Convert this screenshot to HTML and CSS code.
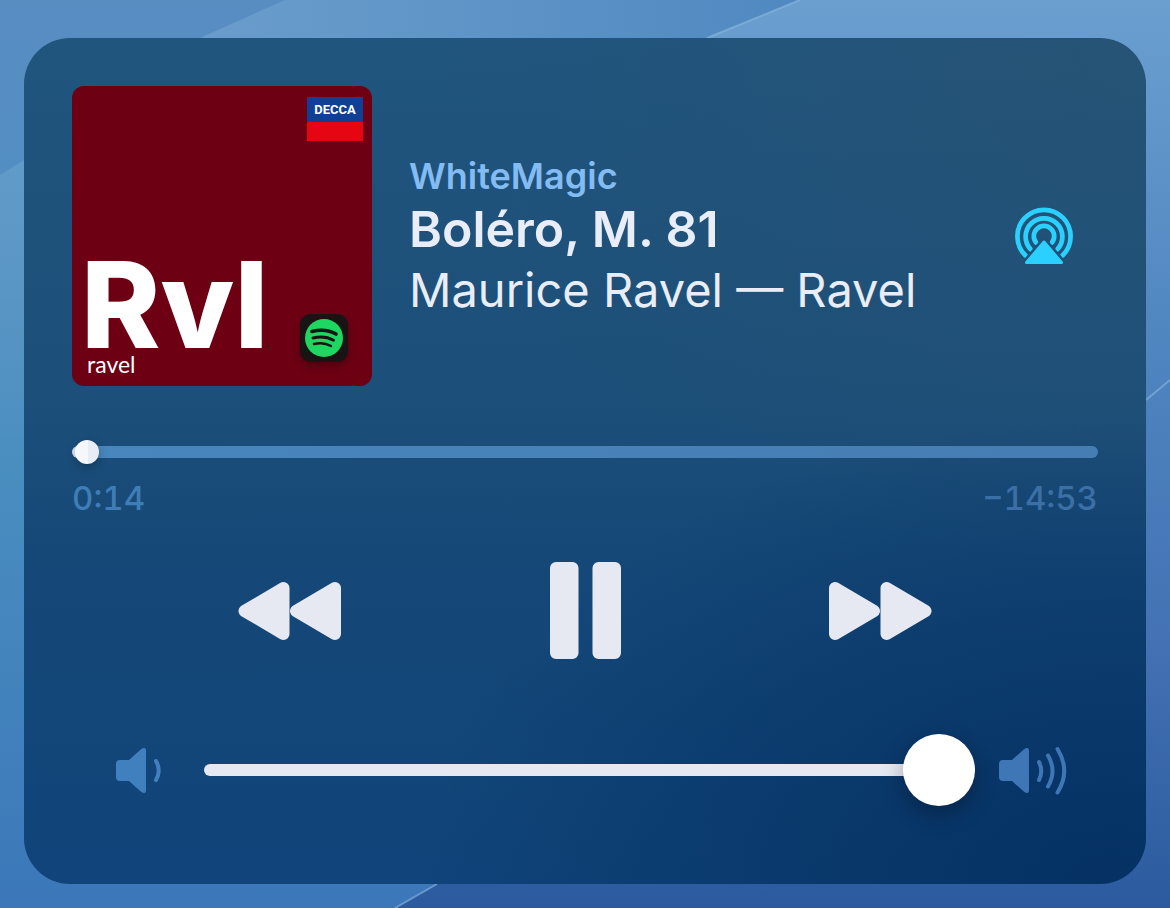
FILE: index.html
```html
<!DOCTYPE html>
<html lang="en">
<head>
  <meta charset="UTF-8">
  <meta name="viewport" content="width=device-width, initial-scale=1.0">
  <title>Now Playing</title>
  <link rel="stylesheet" href="styles.css">
</head>
<body>
  <!-- Wallpaper -->
  <svg class="wallpaper" viewBox="0 0 1170 908" preserveAspectRatio="none" aria-hidden="true">
    <defs>
      <linearGradient id="sky" x1="0" y1="0" x2="0" y2="1">
        <stop offset="0" stop-color="#588dc2"/>
        <stop offset="0.5" stop-color="#4a8fc0"/>
        <stop offset="1" stop-color="#3b77b9"/>
      </linearGradient>
      <linearGradient id="right" x1="0" y1="0" x2="0" y2="1">
        <stop offset="0" stop-color="#6b9fd0"/>
        <stop offset="0.4" stop-color="#4e84bf"/>
        <stop offset="0.7" stop-color="#4472b4"/>
        <stop offset="1" stop-color="#2b5a9e"/>
      </linearGradient>
      <linearGradient id="band" x1="0" y1="0" x2="1" y2="0">
        <stop offset="0" stop-color="#6a9dcc"/>
        <stop offset="1" stop-color="#5089c1"/>
      </linearGradient>
      <linearGradient id="glow" x1="0" y1="0" x2="0" y2="1">
        <stop offset="0" stop-color="#619bc9"/>
        <stop offset="1" stop-color="#619bc9" stop-opacity="0"/>
      </linearGradient>
    </defs>
    <rect width="1170" height="908" fill="url(#sky)"/>
    <path d="M0 175 24 160V450H0Z" fill="url(#glow)"/>
    <path d="M200 38 285 0H800L707 38Z" fill="url(#band)"/>
    <path d="M707 38 800 0H1170V908H395L437 884H700Z" fill="url(#right)"/>
    <path d="M707 38 800 0M395 908 437 884M1146 400 1170 380" stroke="#8db8df" stroke-width="2" opacity="0.6"/>
  </svg>

  <main class="player">
    <section class="now-playing">
      <div class="artwork">
        <div class="label"><span class="label-name">DECCA</span></div>
        <div class="cover-text">
          <span class="cover-title">Rvl</span>
          <span class="cover-artist">ravel</span>
        </div>
        <div class="app-badge">
          <svg viewBox="0 0 48 48" role="img" aria-label="Spotify">
            <circle cx="24" cy="24" r="19" fill="#1ed760"/>
            <g fill="none" stroke="#191414" stroke-linecap="round">
              <path d="M12 17.500C20 15.500 29 16 36 20" stroke-width="3.600"/>
              <path d="M13 24C20 22.200 27.500 22.800 33.500 26.200" stroke-width="3"/>
              <path d="M14 30C20 28.600 26 29 31 32" stroke-width="2.500"/>
            </g>
          </svg>
        </div>
      </div>

      <div class="track-info">
        <p class="device">WhiteMagic</p>
        <h1 class="title">Boléro, M. 81</h1>
        <p class="artist">Maurice Ravel — Ravel</p>
      </div>

      <button type="button" class="airplay" aria-label="AirPlay">
        <svg viewBox="0 0 60 60" width="60" height="60">
          <g fill="none" stroke="#2ad0ff" stroke-width="4.700" stroke-linecap="round">
            <path d="M11.500 49.500A26.600 26.600 0 1 1 48.500 49.500"/>
            <path d="M16.500 43.200A18.400 18.400 0 1 1 43.500 43.200"/>
            <path d="M22 36.500A10.200 10.200 0 1 1 38 36.500"/>
          </g>
          <path d="M30 36 47 56H13Z" fill="#215178" stroke="#215178" stroke-width="8" stroke-linejoin="round"/>
          <path d="M30 36 47.500 56.500H12.500Z" fill="#2ad0ff" stroke="#2ad0ff" stroke-width="3" stroke-linejoin="round"/>
        </svg>
      </button>
    </section>

    <section class="progress">
      <input type="range" class="seek" min="0" max="1000" value="3" aria-label="Playback position">
      <div class="times">
        <span>0:14</span>
        <span class="remaining">−14:53</span>
      </div>
    </section>

    <section class="controls">
      <button type="button" aria-label="Rewind">
        <svg viewBox="0 0 103 60" width="103" height="60">
          <path d="M6.500 30 45.500 7V53Z"/>
          <path d="M58 30 97 7V53Z"/>
        </svg>
      </button>
      <button type="button" aria-label="Pause">
        <svg viewBox="0 0 71 97" width="71" height="97">
          <rect x="3" y="3" width="22.500" height="91" rx="3"/>
          <rect x="45.500" y="3" width="22.500" height="91" rx="3"/>
        </svg>
      </button>
      <button type="button" aria-label="Fast forward">
        <svg viewBox="0 0 103 60" width="103" height="60">
          <path d="M45 30 6 7V53Z"/>
          <path d="M96.500 30 57.500 7V53Z"/>
        </svg>
      </button>
    </section>

    <section class="volume">
      <svg class="speaker" viewBox="0 0 46 50" width="46" height="50" aria-hidden="true">
        <path d="M4 15H13L25 4.200Q30 1 30 6V45Q30 50 25 46.800L13 36H4Q0 36 0 32V19Q0 15 4 15Z"/>
        <path class="wave" d="M40 16Q45.500 25.500 40 35"/>
      </svg>
      <input type="range" class="level" min="0" max="100" value="100" aria-label="Volume">
      <svg class="speaker speaker-loud" viewBox="0 0 68 50" width="68" height="50" aria-hidden="true">
        <path d="M4 15H13L25 4.200Q30 1 30 6V45Q30 50 25 46.800L13 36H4Q0 36 0 32V19Q0 15 4 15Z"/>
        <path class="wave" d="M40 17Q44.500 26 40 35M49 10.500Q58 26 49 41.500M58.500 4Q72 26 58.500 47.500"/>
      </svg>
    </section>
  </main>
</body>
</html>
```

FILE: styles.css
```css
* {
  box-sizing: border-box;
  margin: 0;
  padding: 0;
}

body {
  display: grid;
  min-height: 100vh;
  font-family: Inter, "Liberation Sans", sans-serif;
  background: #4a83bd;
}

.wallpaper,
.player {
  grid-area: 1 / 1;
}

.wallpaper {
  width: 100%;
  height: 100%;
  min-height: 0;
  contain: size;
}

.player {
  z-index: 1;
  margin: 38px 24px 24px;
  padding: 48px;
  border-radius: 46px;
  background:
    radial-gradient(ellipse 62% 55% at 97% 100%, #053163 0%, rgba(5, 49, 99, 0.6) 45%, rgba(5, 49, 99, 0) 100%),
    radial-gradient(ellipse at 100% 0%, rgba(42, 82, 112, 0.6) 0%, rgba(42, 82, 112, 0) 45%),
    linear-gradient(#20557e 0%, #1c4f79 42%, #154877 62%, #10447a 100%);
}

button {
  display: block;
  border: none;
  background: none;
  cursor: pointer;
}

svg {
  display: block;
}

/* Artwork and track */
.now-playing {
  display: flex;
  align-items: center;
}

.artwork {
  position: relative;
  display: flex;
  flex-direction: column;
  justify-content: space-between;
  flex: none;
  width: 300px;
  height: 300px;
  padding: 11px 9px 8px;
  border-radius: 12px;
  background: #6e0014;
  color: #fff;
}

.label {
  align-self: flex-end;
  width: 56px;
  height: 44px;
  background: linear-gradient(#0f4096 25px, #e60613 25px);
  text-align: center;
}

.label-name {
  display: block;
  font: bold 13px/25px Roboto, sans-serif;
}

.cover-title,
.cover-artist {
  display: block;
}

.cover-title {
  font: 800 120px/90px Inter, sans-serif;
}

.cover-artist {
  padding-left: 6px;
  font: 400 23px/28px Lato, sans-serif;
}

.app-badge {
  position: absolute;
  right: 24px;
  bottom: 24px;
  width: 48px;
  height: 48px;
  border-radius: 11px;
  background: #191414;
  box-shadow: 0 4px 10px rgba(0, 0, 0, 0.3);
}

.track-info {
  flex: 1;
  padding: 2px 0 0 37px;
  color: #e8edf7;
}

.device {
  font-size: 36px;
  font-weight: 600;
  line-height: 46px;
  color: #83bcf2;
}

.title {
  font-size: 50px;
  font-weight: 600;
  line-height: 60px;
}

.artist {
  font-size: 47px;
  font-weight: 400;
  line-height: 62px;
}

.airplay {
  margin-right: 24px;
}

/* Sliders */
input[type="range"] {
  -webkit-appearance: none;
  appearance: none;
  display: block;
  width: 100%;
  background: transparent;
  cursor: pointer;
}

input[type="range"]::-webkit-slider-runnable-track {
  height: 12px;
  border-radius: 6px;
}

input[type="range"]::-webkit-slider-thumb {
  -webkit-appearance: none;
  border-radius: 50%;
}

.progress {
  margin-top: 54px;
}

.seek {
  height: 24px;
}

.seek::-webkit-slider-runnable-track {
  background: linear-gradient(90deg, #dfe7f2 16px, #4886bd 16px, #467db2 100%);
}

.seek::-webkit-slider-thumb {
  width: 24px;
  height: 24px;
  margin-top: -6px;
  background: linear-gradient(90deg, #f6f7fb 13px, #e6edf7 13px);
  box-shadow: 0 3px 8px rgba(0, 0, 0, 0.25);
}

.times {
  display: flex;
  justify-content: space-between;
  margin-top: 14px;
  font-size: 33px;
  font-weight: 500;
  font-variant-numeric: tabular-nums;
  line-height: 40px;
  color: #3f7db7;
}

.remaining {
  color: #3b6fa6;
}

/* Transport */
.controls {
  display: flex;
  align-items: center;
  justify-content: space-between;
  margin-top: 44px;
  padding: 0 166px;
}

.controls svg {
  fill: #e6e9f2;
  stroke: #e6e9f2;
  stroke-linejoin: round;
}

.controls path {
  stroke-width: 12;
}

.controls rect {
  stroke-width: 6;
}

/* Volume */
.volume {
  display: flex;
  align-items: center;
  margin-top: 75px;
  padding: 0 31px 0 44px;
}

.speaker {
  flex: none;
  margin-right: 42px;
  fill: #4080bf;
  color: #4080bf;
}

.speaker-loud {
  margin: 0 0 0 24px;
  fill: #3f76b5;
  color: #3f76b5;
}

.wave {
  fill: none;
  stroke: currentColor;
  stroke-width: 4;
  stroke-linecap: round;
}

.level {
  flex: 1;
  min-width: 0;
  height: 72px;
}

.level::-webkit-slider-runnable-track {
  background: #e6e8f2;
}

.level::-webkit-slider-thumb {
  width: 72px;
  height: 72px;
  margin-top: -30px;
  background: #fff;
  box-shadow: 0 8px 22px rgba(0, 0, 0, 0.3);
}
```
